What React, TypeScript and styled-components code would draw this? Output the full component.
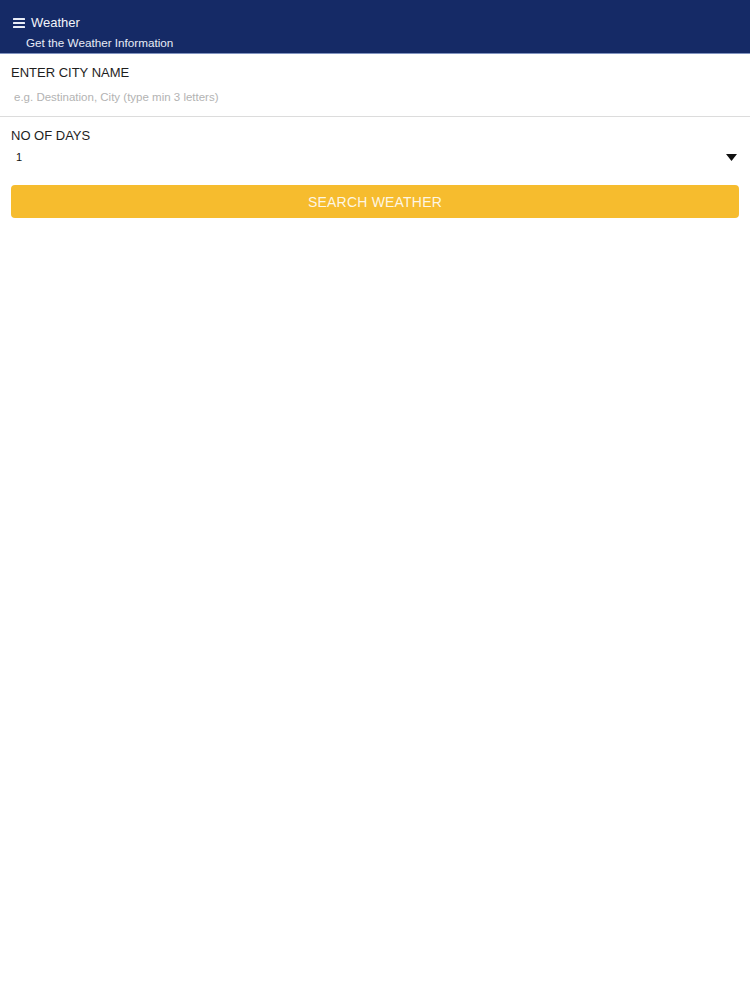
import React from "react";
import styled, { createGlobalStyle } from "styled-components";

const Global = createGlobalStyle`
  html, body { margin: 0; padding: 0; background: #ffffff; }
  body { font-family: "Liberation Sans", Arial, sans-serif; -webkit-font-smoothing: antialiased; }
  * { box-sizing: border-box; }
`;

const Page = styled.div`
  width: 750px;
  min-height: 1000px;
  background: #fff;
  display: flex;
  flex-direction: column;
`;

const Header = styled.header`
  height: 54px;
  background: #152a66;
  border-bottom: 1px solid #8193c0;
  padding: 14px 0 0 13px;
  display: flex;
  flex-direction: column;
  gap: 3px;
  color: #ffffff;
`;

const TitleRow = styled.div`
  display: flex;
  align-items: center;
  gap: 6px;
  height: 18px;
`;

const Title = styled.span`
  font-size: 13px;
  line-height: 18px;
  color: #f2f4fa;
`;

const Subtitle = styled.span`
  margin-left: 13px;
  font-size: 11.7px;
  line-height: 16px;
  color: #e8ecf6;
`;

const Section = styled.section<{ $divider?: boolean; $gap: number }>`
  padding: 11px 11px 8px 11px;
  display: flex;
  flex-direction: column;
  gap: ${(p) => p.$gap}px;
  border-bottom: ${(p) => (p.$divider ? "1px solid #dcdcdc" : "none")};
`;

const Label = styled.label`
  font-size: 13px;
  line-height: 16px;
  color: #1e1e1e;
`;

const Input = styled.input`
  border: none;
  outline: none;
  height: 22px;
  padding: 0 0 0 3px;
  font-family: inherit;
  font-size: 11.5px;
  color: #222;
  background: transparent;
  &::placeholder { color: #b3b3b3; }
`;

const SelectRow = styled.div`
  display: flex;
  align-items: center;
  justify-content: space-between;
  height: 20px;
  padding: 0 2px 0 5px;
`;

const SelectValue = styled.span`
  font-size: 11px;
  color: #111;
`;

const Button = styled.button`
  margin: 10px 11px 0 11px;
  height: 33px;
  border: none;
  border-radius: 4px;
  background: #f6bc2e;
  color: rgba(255, 255, 255, 0.88);
  font-family: inherit;
  font-size: 14px;
  letter-spacing: 0.2px;
  cursor: pointer;
`;

const Hamburger = () => (
  <svg width="12" height="10" viewBox="0 0 12 10">
    <rect x="0" y="0" width="12" height="2" rx="0.5" fill="#e9edf7" />
    <rect x="0" y="4" width="12" height="2" rx="0.5" fill="#e9edf7" />
    <rect x="0" y="8" width="12" height="2" rx="0.5" fill="#e9edf7" />
  </svg>
);

const Caret = () => (
  <svg width="11" height="7" viewBox="0 0 11 7">
    <polygon points="0,0 11,0 5.5,7" fill="#111" />
  </svg>
);

export default function App() {
  return (
    <Page>
      <Global />
      <Header>
        <TitleRow>
          <Hamburger />
          <Title>Weather</Title>
        </TitleRow>
        <Subtitle>Get the Weather Information</Subtitle>
      </Header>
      <Section $divider $gap={5}>
        <Label>ENTER CITY NAME</Label>
        <Input placeholder="e.g. Destination, City (type min 3 letters)" />
      </Section>
      <Section $gap={3}>
        <Label>NO OF DAYS</Label>
        <SelectRow>
          <SelectValue>1</SelectValue>
          <Caret />
        </SelectRow>
      </Section>
      <Button>SEARCH WEATHER</Button>
    </Page>
  );
}
